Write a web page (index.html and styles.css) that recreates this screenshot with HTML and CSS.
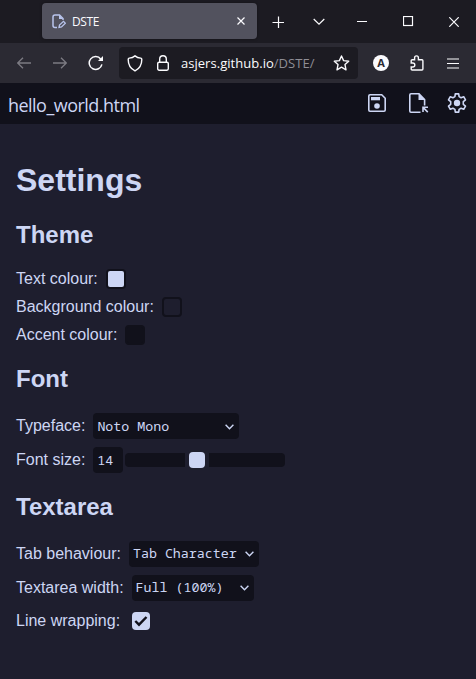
FILE: index.html
```html
<!DOCTYPE html>
<html lang="en">
<head>
<meta charset="utf-8">
<title>DSTE</title>
<link rel="stylesheet" href="styles.css">
</head>
<body>
<div class="tabbar">
  <div class="tab">
    <svg class="favicon" width="14" height="15" viewBox="0 0 14 15"><path d="M5 13.5H3Q1 13.5 1 11.5V3Q1 1 3 1H7.5L11 4.5V6" fill="none" stroke="currentColor" stroke-width="1.5"/><path d="M7 1V5H11Z" fill="currentColor"/><path d="M7 13.5L7.5 11L11.5 7.3L13.4 9.2L9.5 13Z" fill="none" stroke="currentColor" stroke-width="1.3"/></svg>
    <span class="tab-title">DSTE</span>
    <svg class="tab-close" width="8" height="8" viewBox="0 0 8 8"><path d="M.5 .5L7.5 7.5M7.5 .5L.5 7.5"/></svg>
  </div>
  <div class="window-tools">
    <svg width="12" height="12" viewBox="0 0 12 12"><path d="M6.5 .5V12M.5 6.5H12"/></svg>
    <svg width="12" height="12" viewBox="0 0 12 12"><path d="M.7 3L6 8.2L11.3 3"/></svg>
    <svg width="10" height="12" viewBox="0 0 10 12"><path d="M0 5.5H10" stroke-width="1"/></svg>
    <svg width="11" height="11" viewBox="0 0 11 11"><rect x=".5" y=".5" width="9" height="9"/></svg>
    <svg width="10" height="10" viewBox="0 0 10 10"><path d="M.3 .3L9.7 9.7M9.7 .3L.3 9.7"/></svg>
  </div>
</div>
<div class="navbar">
  <svg class="back" width="14" height="12" viewBox="0 0 14 12"><path d="M14 6H.8M6 .7L.7 6L6 11.3"/></svg>
  <svg class="forward" width="14" height="12" viewBox="0 0 14 12"><path d="M0 6H13.2M8 .7L13.3 6L8 11.3"/></svg>
  <svg class="reload" width="16" height="16" viewBox="0 0 16 16"><path d="M12.8 4.2A6.4 6.4 0 1 0 13.9 9.3" stroke-width="1.5"/><path class="solid" d="M15 1V6H10Z"/></svg>
  <div class="urlbar">
    <svg class="shield" width="16" height="17" viewBox="0 0 16 17"><path d="M8 .9C6.5 2.2 4.5 3 2.3 3.1Q1.2 3.2 1.2 4.5C1.2 9.8 3.2 13.6 8 15.9C12.8 13.6 14.8 9.8 14.8 4.5Q14.8 3.2 13.7 3.1C11.5 3 9.5 2.2 8 .9Z" stroke-width="1.4"/></svg>
    <svg class="lock" width="12" height="16" viewBox="0 0 12 16"><rect x=".7" y="7.2" width="10.6" height="8" rx="1.4" stroke-width="1.4"/><path d="M2.7 7V4A3.3 3.3 0 0 1 9.3 4V7" stroke-width="1.4"/></svg>
    <span class="url">asjers.github.io<span class="path">/DSTE/</span></span>
    <svg class="star" width="17" height="16" viewBox="0 0 17 16"><path d="M8.5 1L10.6 5.6L15.7 6.2L12 9.6L13 14.8L8.5 12.2L4 14.8L5 9.6L1.3 6.2L6.4 5.6Z" stroke-width="1.4" stroke-linejoin="round"/></svg>
  </div>
  <span class="account">A</span>
  <svg class="puzzle" width="14" height="16" viewBox="0 0 14 16"><path d="M1.2 8V5.7Q1.2 4.7 2.2 4.7H4.6V2.8A1.9 1.9 0 0 1 8.4 2.8V4.7H12Q12.9 4.7 12.9 5.7V14Q12.9 15 12 15H2.2Q1.2 15 1.2 14V12H2.8A1.9 1.9 0 0 0 2.8 8Z" stroke-width="1.4"/></svg>
  <svg class="menu" width="12" height="11" viewBox="0 0 12 11"><path d="M0 1H12M0 5.5H12M0 10H12" stroke-width="1.2"/></svg>
</div>
<header class="toolbar">
  <span class="filename">hello_world.html</span>
  <svg class="save" width="18" height="18" viewBox="0 0 18 18"><path d="M2 .8H13.7L17.2 4.3V16Q17.2 17.2 16 17.2H2Q.8 17.2 .8 16V2Q.8 .8 2 .8Z" fill="none" stroke="currentColor" stroke-width="1.6"/><path d="M3 3H12V6.3H3Z" fill="currentColor"/><circle cx="9" cy="12" r="2.8" fill="currentColor"/></svg>
  <svg class="open" width="20" height="20" viewBox="0 0 20 20"><path d="M11.5 19.2H2Q.8 19.2 .8 18V2Q.8 .8 2 .8H10L15.6 6.5V12.5" fill="none" stroke="currentColor" stroke-width="1.6"/><path d="M9.5 .5V7H16Z" fill="currentColor"/><path d="M14 19V14.3H19M14.3 14.6L18.8 19.1" fill="none" stroke="currentColor" stroke-width="1.6"/></svg>
  <svg class="gear" width="20" height="20" viewBox="0 0 20 20"><path d="M8.3 .9H11.7L12.1 3.6L14.1 4.7L16.7 3.7L18.5 6.9L16.3 8.7V11.3L18.5 13.1L16.7 16.3L14.1 15.3L12.1 16.4L11.7 19.1H8.3L7.9 16.4L5.9 15.3L3.3 16.3L1.5 13.1L3.7 11.3V8.7L1.5 6.9L3.3 3.7L5.9 4.7L7.9 3.6Z" fill="none" stroke="currentColor" stroke-width="1.6" stroke-linejoin="round"/><circle cx="10" cy="10" r="3.2" fill="currentColor"/></svg>
</header>
<main>
  <h1>Settings</h1>
  <section class="theme">
    <h2>Theme</h2>
    <div class="row"><span class="label">Text colour:</span><span class="swatch text"></span></div>
    <div class="row"><span class="label">Background colour:</span><span class="swatch background"></span></div>
    <div class="row"><span class="label">Accent colour:</span><span class="swatch accent"></span></div>
  </section>
  <section class="font">
    <h2>Font</h2>
    <div class="row"><span class="label">Typeface:</span><div class="field typeface">Noto Mono<svg width="9" height="6" viewBox="0 0 9 6"><path d="M.6 .8L4.5 4.8L8.4 .8"/></svg></div></div>
    <div class="row"><span class="label">Font size:</span><div class="field size">14</div><div class="slider"><span class="gap"><span class="thumb"></span></span></div></div>
  </section>
  <section class="textarea">
    <h2>Textarea</h2>
    <div class="row"><span class="label">Tab behaviour:</span><div class="field tabs">Tab Character<svg width="9" height="6" viewBox="0 0 9 6"><path d="M.6 .8L4.5 4.8L8.4 .8"/></svg></div></div>
    <div class="row"><span class="label">Textarea width:</span><div class="field width">Full (100%)<svg width="9" height="6" viewBox="0 0 9 6"><path d="M.6 .8L4.5 4.8L8.4 .8"/></svg></div></div>
    <div class="row wrapping"><span class="label">Line wrapping:</span><span class="checkbox"><svg width="14" height="12" viewBox="0 0 14 12"><path d="M1.3 6L5 9.7L12.5 2"/></svg></span></div>
  </section>
</main>
</body>
</html>
```
FILE: styles.css
```css
* { box-sizing: border-box; }
body {
  margin: 0;
  height: 679px;
  overflow: hidden;
  background: #1e1e2e;
  color: #cdd6f4;
  font-family: "Liberation Sans", Arial, sans-serif;
  font-size: 16px;
}
svg { display: block; flex: none; }
.tabbar, .navbar, .toolbar, .tab, .window-tools, .urlbar, .row, .field { display: flex; align-items: center; }

.tabbar { height: 43px; padding-left: 42px; background: #1c1b22; color: #fbfbfe; }
.tab {
  width: 215px;
  height: 36px;
  margin-bottom: 1px;
  padding: 0 12px 0 10px;
  border-radius: 4px;
  background: #52525e;
  box-shadow: 0 0 3px #0006;
  font: 12px "Open Sans", "Noto Sans", sans-serif;
}
.favicon { color: #b9c5ed; }
.tab-title { margin-left: 6px; letter-spacing: -.4px; }
.tab-close { margin-left: auto; }
.tabbar > .window-tools { margin-left: 15px; }
.window-tools svg, .tab-close { fill: none; stroke: #fbfbfe; stroke-width: 1.2; }
.window-tools svg:nth-child(2) { margin-left: 29px; }
.window-tools svg:nth-child(3) { margin-left: 32px; }
.window-tools svg:nth-child(4) { margin-left: 36px; }
.window-tools svg:nth-child(5) { margin-left: 35px; }

.navbar { height: 40px; padding-left: 17px; background: #2b2a33; color: #fbfbfe; }
.navbar svg { fill: none; stroke: #fbfbfe; }
.navbar .back, .navbar .forward { stroke: #7c7b83; stroke-width: 1.3; }
.forward { margin-left: 22px; }
.reload { margin-left: 21px; }
.reload .solid { fill: #fbfbfe; stroke: none; }
.urlbar {
  width: 239px;
  height: 32px;
  margin-left: 15px;
  padding: 0 8px 0 8px;
  border-radius: 4px;
  background: #1c1b22;
  font: 13px "Open Sans", "Noto Sans", sans-serif;
}
.lock { margin-left: 14px; }
.url { margin-left: 12px; letter-spacing: .03px; white-space: nowrap; }
.path { color: #8f8e95; }
.star { margin-left: auto; }
.account {
  width: 16px;
  height: 16px;
  margin-left: 15px;
  border-radius: 50%;
  background: #fbfbfe;
  color: #2b2a33;
  font: bold 11px/16px "Open Sans", sans-serif;
  text-align: center;
}
.puzzle { margin-left: 21px; }
.menu { margin-left: 23px; }

.toolbar { height: 41px; padding: 0 9px 1px 8px; background: #11111b; }
.filename { font: 18px "Open Sans", "Noto Sans", sans-serif; letter-spacing: -.53px; padding-top: 3px; }
.save { margin-left: auto; }
.open { margin-left: 23px; }
.gear { margin-left: 18px; }

main { padding: 37px 16px 0; }
h1, h2 { margin: 0; font-weight: bold; }
h1 { font-size: 32px; line-height: 38px; }
h2 { font-size: 24px; line-height: 28px; }
.theme { margin-top: 22px; }
.theme h2 { margin-bottom: 16px; }
.theme .row { height: 28px; }
.font { margin-top: 16px; }
.textarea { margin-top: 16px; }
.font h2, .textarea h2 { margin-bottom: 16px; }
.font .row, .textarea .row { height: 34px; }
.textarea .wrapping { height: 32px; }
.label { white-space: nowrap; }
.swatch { width: 20px; height: 20px; margin-left: 8px; border: 2px solid #11111b; border-radius: 4px; }
.swatch.text { background: #cdd6f4; }
.swatch.background { background: #1e1e2e; }
.swatch.accent { background: #11111b; }
.field {
  height: 26px;
  margin-left: 8px;
  padding: 0 5px 1px 4px;
  border-radius: 4px;
  background: #11111b;
  font: 13.3px "Noto Mono", "Noto Sans Mono", "DejaVu Sans Mono", monospace;
  white-space: pre;
}
.field svg { margin: 2px 0 0 auto; fill: none; stroke: #cdd6f4; stroke-width: 1.4; }
.typeface { width: 146px; }
.size { width: 30px; }
.tabs { width: 130px; }
.textarea .field { margin-bottom: 1px; }
.width { width: 122px; }
.slider { display: flex; align-items: center; width: 160px; height: 14px; margin-left: 2px; padding-left: 60px; border-radius: 4px; background: #11111b; }
.gap { padding: 0 4px; background: #1e1e2e; }
.thumb { display: block; width: 16px; height: 16px; background: #cdd6f4; border-radius: 4px; }
.checkbox { display: grid; place-items: center; width: 18px; height: 18px; margin-left: 12px; border-radius: 4px; background: #cdd6f4; }
.checkbox svg { fill: none; stroke: #11111b; stroke-width: 2.4; }
```
